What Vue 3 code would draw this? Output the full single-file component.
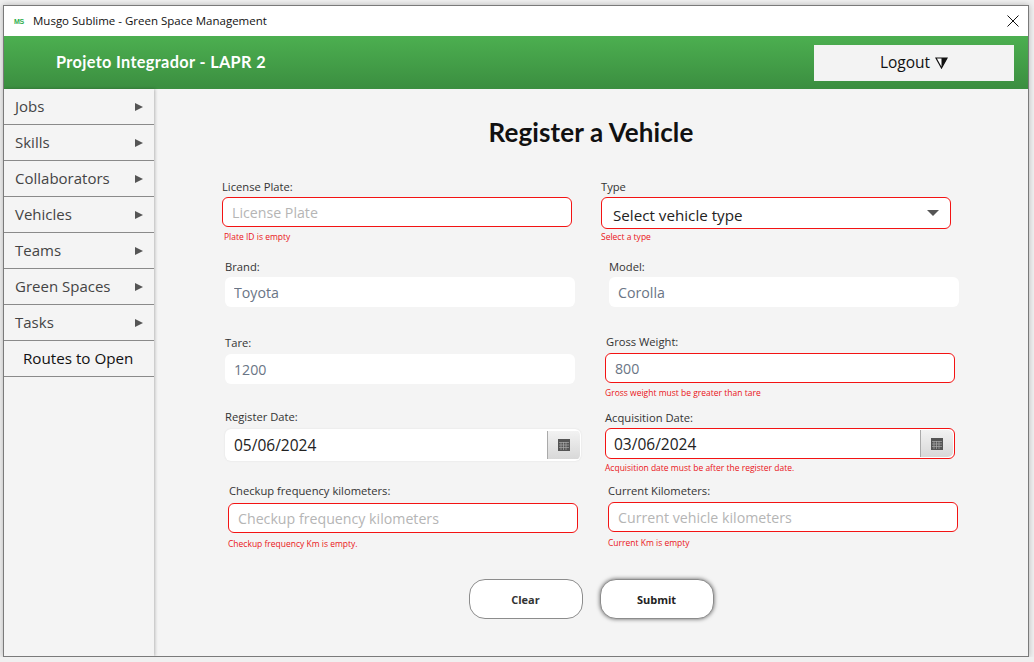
<script setup>
const menu = ['Jobs', 'Skills', 'Collaborators', 'Vehicles', 'Teams', 'Green Spaces', 'Tasks']
</script>

<template>
  <div class="window">
    <div class="titlebar">
      <span class="logo">MS</span>
      <span class="title-text">Musgo Sublime - Green Space Management</span>
      <svg class="close" width="12" height="12" viewBox="0 0 12 12"><path d="M.5.5l11 11M11.500.5l-11 11" stroke="#111" fill="none" stroke-width="1"/></svg>
    </div>
    <header class="header">
      <h1 class="brand">Projeto Integrador - LAPR 2</h1>
      <button class="logout"><span class="logout-text">Logout</span>
        <svg width="13" height="12" viewBox="0 0 13 12"><path d="M1 1h11L6.500 11z" fill="#fff" stroke="#111" stroke-width="1.200"/><path d="M6.500 1H12L6.500 11z" fill="#111"/></svg>
      </button>
    </header>
    <div class="body">
      <nav class="sidebar">
        <div v-for="m in menu" :key="m" class="item"><span class="item-text">{{ m }}</span><i class="arrow"></i></div>
        <div class="item plain"><span class="item-text">Routes to Open</span></div>
      </nav>
      <main class="main">
        <h2 class="heading">Register a Vehicle</h2>
        <form class="form" @submit.prevent>
          <div class="field x0">
            <label>License Plate:</label>
            <input class="ctl err" placeholder="License Plate" />
            <small class="in2">Plate ID is empty</small>
          </div>
          <div class="field x0">
            <label>Type</label>
            <div class="ctl err select"><span class="sel-text">Select vehicle type</span><i class="caret"></i></div>
            <small class="tight">Select a type</small>
          </div>

          <div class="field x3">
            <label>Brand:</label>
            <input class="ctl muted" value="Toyota" />
          </div>
          <div class="field x8">
            <label>Model:</label>
            <input class="ctl muted" value="Corolla" />
          </div>

          <div class="field x3 down1 gap4">
            <label>Tare:</label>
            <input class="ctl muted" value="1200" />
          </div>
          <div class="field x4 gap4">
            <label class="in1">Gross Weight:</label>
            <input class="ctl err muted" value="800" />
            <small>Gross weight must be greater than tare</small>
          </div>

          <div class="field x3 gap5">
            <label>Register Date:</label>
            <div class="ctl date plainbox">
              <span>05/06/2024</span>
              <span class="cal"><svg width="12" height="12" viewBox="0 0 12 12"><rect width="12" height="12" fill="#555"/><path d="M1 3.500h10M1 6h10M1 8.500h10M3 3v8M5.500 3v8M8 3v8" stroke="#aaa" stroke-width=".7"/></svg></span>
            </div>
          </div>
          <div class="field x4 down1 gap3">
            <label>Acquisition Date:</label>
            <div class="ctl date err acq">
              <span>03/06/2024</span>
              <span class="cal"><svg width="12" height="12" viewBox="0 0 12 12"><rect width="12" height="12" fill="#555"/><path d="M1 3.500h10M1 6h10M1 8.500h10M3 3v8M5.500 3v8M8 3v8" stroke="#aaa" stroke-width=".7"/></svg></span>
            </div>
            <small class="tight3">Acquisition date must be after the register date.</small>
          </div>

          <div class="field x6 gap5">
            <label class="in1">Checkup frequency kilometers:</label>
            <input class="ctl err" placeholder="Checkup frequency kilometers" />
            <small class="low">Checkup frequency Km is empty.</small>
          </div>
          <div class="field x7 gap4">
            <label>Current Kilometers:</label>
            <input class="ctl err" placeholder="Current vehicle kilometers" />
            <small class="low">Current Km is empty</small>
          </div>
        </form>
        <div class="actions">
          <button class="btn">Clear</button>
          <button class="btn primary">Submit</button>
        </div>
      </main>
    </div>
  </div>
</template>

<style>
html, body { margin: 0; background: #f0f0f0; }
</style>

<style scoped>
* { box-sizing: border-box; }
.window {
  width: 1026px; height: 652px; margin: 5px 0 0 3px;
  border: 1px solid #7a7a7a; background: #f4f4f4;
  box-shadow: 0 0 6px rgba(0,0,0,.25);
  font-family: "Open Sans", "Noto Sans", sans-serif;
  display: flex; flex-direction: column; overflow: hidden;
}
.titlebar { height: 30px; background: #fff; display: flex; align-items: center; padding: 0 9px 0 10px; flex: none; }
.logo { width: 19px; font: 700 7px/1 "Liberation Sans", sans-serif; color: #2fae4e; letter-spacing: -.3px; }
.title-text { font-size: 11.500px; color: #111; flex: 1; position: relative; top: -1px; }
.close { flex: none; }
.header {
  height: 53px; flex: none; display: flex; align-items: center; justify-content: space-between;
  background: linear-gradient(#4caf50, #3b8e40); padding: 0 14px 0 52px;
}
.brand { margin: 0; font: 700 16.300px "Lato", sans-serif; color: #fff; letter-spacing: .35px; position: relative; top: -1px; }
.logout {
  width: 200px; height: 36px; border: 0; background: #f3f3f3; color: #111;
  font: 15.500px "Open Sans", sans-serif; display: flex; align-items: center; justify-content: center; gap: 5px;
}
.logout-text { position: relative; top: -1px; }
.body { flex: 1; display: flex; min-height: 0; }
.sidebar { width: 150px; flex: none; background: #f4f4f4; box-shadow: 1px 0 3px rgba(0,0,0,.25); position: relative; }
.item {
  height: 36px; border-bottom: 1px solid #8a8a8a; display: flex; align-items: center; justify-content: space-between;
  padding: 0 11px; font-size: 15px; color: #444;
}
.item-text { position: relative; top: -1px; }
.plain { justify-content: flex-start; padding-left: 19px; color: #111; font-size: 15.200px; }
.arrow { width: 0; height: 0; border-left: 8px solid #555; border-top: 4px solid transparent; border-bottom: 4px solid transparent; }
.main { flex: 1; min-width: 0; display: flex; flex-direction: column; align-items: center; padding-top: 25px; }
.heading { margin: 0; height: 36px; font: 700 26px/36px "Lato", sans-serif; color: #111; letter-spacing: .1px; }
.form {
  align-self: flex-start; margin: 30px 0 0 68px; display: grid;
  grid-template-columns: 379px 370px; grid-template-rows: 80px 75px 75px 74px 95px;
}
.field { display: flex; flex-direction: column; --gap: 3px; }
.field label { height: 14px; line-height: 14px; font-size: 11.200px; color: #333; margin-bottom: var(--gap); }
.field small { font-size: 8.500px; color: #ea1520; line-height: 12px; margin-top: 4px; }
.field small.low { margin-top: 5px; }
.field small.tight { margin-top: 2px; }
.field small.tight3 { margin-top: 3px; }
.in1 { padding-left: 1px; } .in2 { padding-left: 2px; }
.x0 { margin-left: 0; } .x3 { margin-left: 3px; } .x4 { margin-left: 4px; } .x6 { margin-left: 6px; } .x7 { margin-left: 7px; } .x8 { margin-left: 8px; }
.down1 { margin-top: 1px; } .gap3 { --gap: 3px; } .gap4 { --gap: 4px; } .gap5 { --gap: 5px; }
.ctl {
  width: 350px; height: 30px; border: 1px solid transparent; border-radius: 6px; background: #fff; outline: 0;
  padding: 0 8px 0 9px; font: 14.200px "Open Sans", sans-serif; color: #333;
}
.ctl::placeholder { color: #b5b5b5; opacity: 1; }
.err { border-color: #f31313; }
.muted { color: #6a7585; padding-left: 8px; }
.err.muted { padding-left: 9px; }
.select { height: 32px; display: flex; align-items: center; justify-content: space-between; padding: 0 11px; font-size: 15.200px; color: #222; }
.sel-text { position: relative; top: 2px; }
.caret { border-top: 6px solid #555; border-left: 6px solid transparent; border-right: 6px solid transparent; }
.date { display: flex; align-items: center; justify-content: space-between; padding: 0 0 0 8px; overflow: hidden; color: #222; font-size: 15.500px; }
.plainbox { width: 356px; height: 32px; box-shadow: 0 0 2px #ddd; }
.acq { height: 31px; }
.cal { align-self: stretch; width: 33px; margin: 1px 0 1px 1px; border-left: 1px solid #aaa; background: linear-gradient(#f2f2f2, #d8d8d8); display: flex; align-items: center; justify-content: center; }
.err .cal { margin-right: 1px; border-radius: 0 5px 5px 0; }
.actions { display: flex; gap: 17px; }
.btn { width: 114px; height: 40px; border-radius: 16px; border: 1px solid #8c8c8c; background: #fff; font: 700 11px "Open Sans", sans-serif; color: #333; }
.primary { box-shadow: 0 0 4px rgba(0,0,0,.6); color: #222; }
</style>
